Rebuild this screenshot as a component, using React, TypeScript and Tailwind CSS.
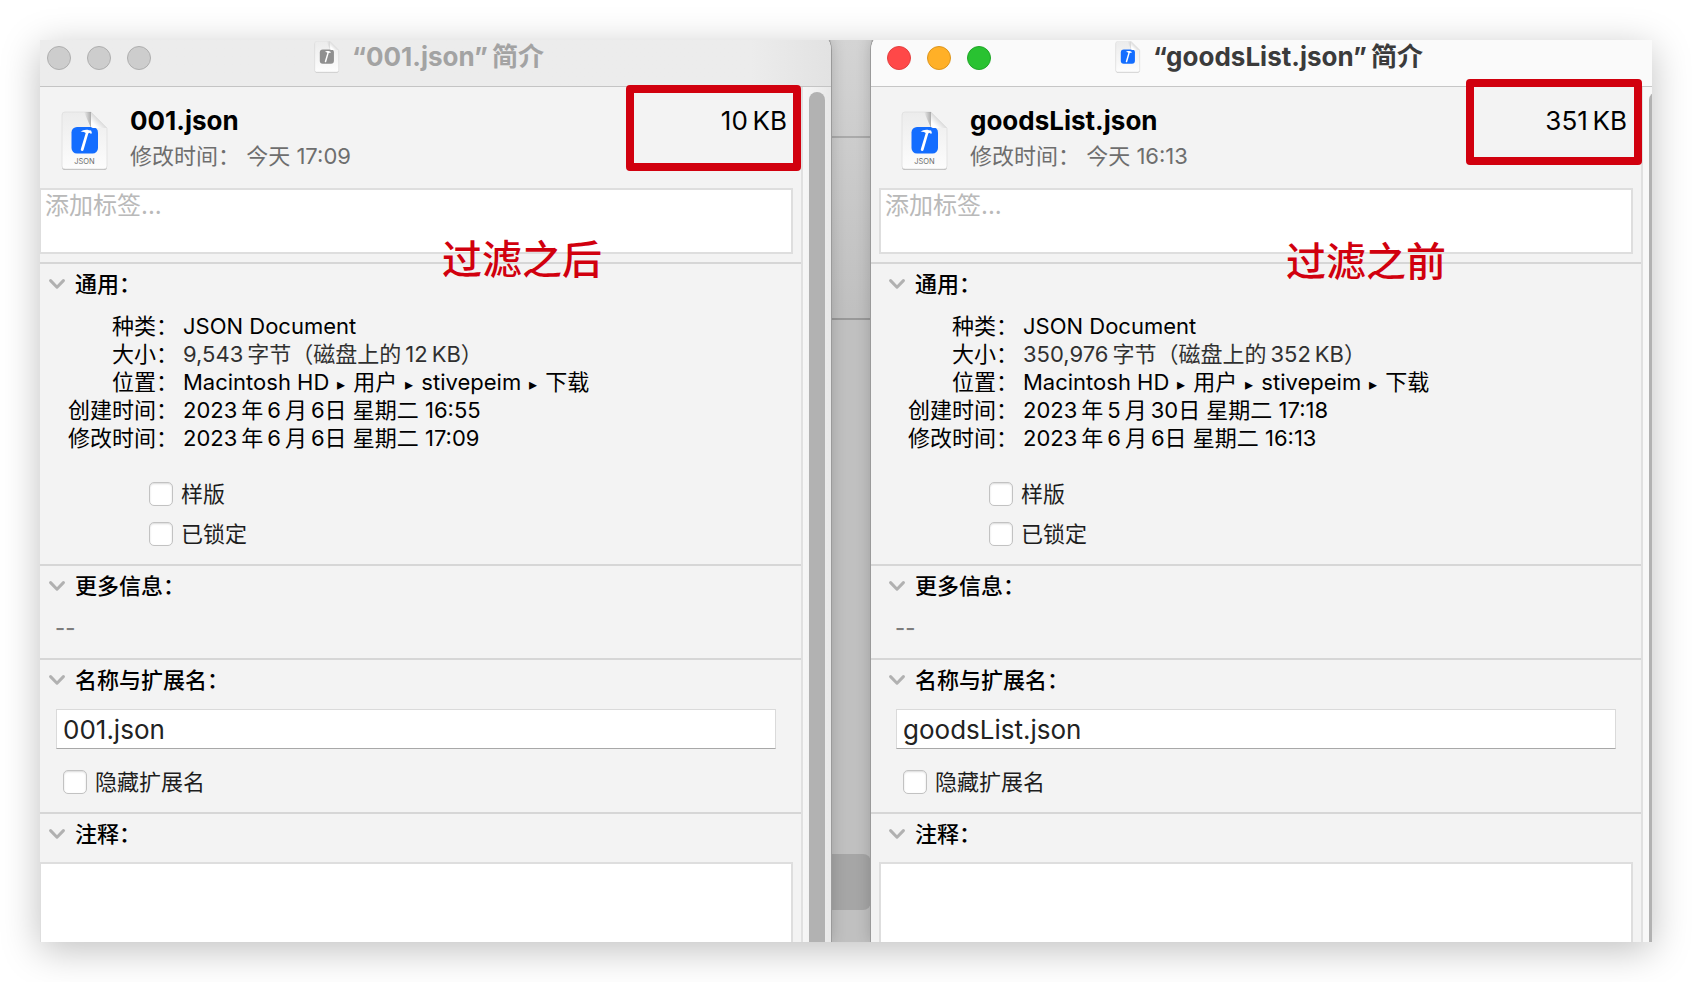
import React, { useId } from "react";

type FileInfo = {
  name: string;
  size: string;
  modifiedShort: string;
  sizeDetail: string;
  created: string;
  modified: string;
};

function FileIcon({ muted = false, label = false, className }: { muted?: boolean; label?: boolean; className: string }) {
  const id = useId();
  return (
    <svg viewBox="0 0 48 60" className={className} aria-hidden="true">
      <defs>
        <linearGradient id={id + "page"} x1="0" y1="0" x2="0" y2="1">
          <stop offset="0" stopColor="#ececec" />
          <stop offset="1" stopColor="#fdfdfd" />
        </linearGradient>
        <linearGradient id={id + "fold"} x1="0" y1="1" x2="1" y2="0">
          <stop offset="0.2" stopColor="#ffffff" />
          <stop offset="0.5" stopColor="#dcdcdc" />
        </linearGradient>
        <linearGradient id={id + "shade"} x1="0" y1="0" x2="1" y2="0">
          <stop offset="0" stopColor="#000" stopOpacity="0" />
          <stop offset="1" stopColor="#000" stopOpacity={label ? 0.28 : 0.1} />
        </linearGradient>
      </defs>
      <path d="M4 2h26l16 16v38a3 3 0 0 1-3 3H4a3 3 0 0 1-3-3V5a3 3 0 0 1 3-3z" fill="#b4b4b4" />
      <path d="M4 1h26l16 16v38a3 3 0 0 1-3 3H4a3 3 0 0 1-3-3V4a3 3 0 0 1 3-3z" fill={`url(#${id}page)`} stroke="#dedede" strokeWidth="0.8" />
      <path d="M23 1h7v16z" fill={`url(#${id}shade)`} />
      <rect x="10.5" y="16" width="26.500" height="26.500" rx="5.500" fill={muted ? "#8f8f8f" : "#136dff"} />
      <path d="M30 1l16 16H32a2 2 0 0 1-2-2z" fill={`url(#${id}fold)`} />
      <path
        d="M19.600 20.900c1.900-1.900 5.700-2.800 8.400-1.700l2.100.3.900 2.700-1.200.5-1.500-.9-1 .6-4.700 16.300c-.3 1-.9 1.400-1.800 1.200-.9-.3-1.200-1-.9-1.900l4.800-16.100c-1.500-1-3.200-1.300-5.100-1z"
        fill="#fff"
      />
      {label && (
        <text x="23.500" y="53" textAnchor="middle" fontSize="7.500" fontFamily="Inter, sans-serif" fill="#6a6a6a">
          JSON
        </text>
      )}
    </svg>
  );
}

function Section({ title, className = "", children }: { title: string; className?: string; children: React.ReactNode }) {
  return (
    <section className={`border-t-2 border-[#d6d6d6] ${className}`}>
      <h2>
        <button type="button" className="ml-[18px] flex h-10 items-center gap-[10px] font-medium text-black">
          <svg viewBox="0 0 16 10" className="h-[10px] w-4" fill="none" stroke="#b1b1b1" strokeWidth="3" strokeLinecap="round" strokeLinejoin="round" aria-hidden="true">
            <path d="M1.600 1.600L8 8.200l6.400-6.600" />
          </svg>
          {title}
        </button>
      </h2>
      {children}
    </section>
  );
}

function Check({ label, className }: { label: string; className: string }) {
  return (
    <label className={`flex h-6 items-center gap-2 text-[#1d1d1d] ${className}`}>
      <input
        type="checkbox"
        className="size-6 shrink-0 appearance-none rounded-[5px] border border-[#c2c2c2] bg-white shadow-[inset_0_1px_2px_rgba(0,0,0,0.15)]"
      />
      {label}
    </label>
  );
}

function Location({ path }: { path: string[] }) {
  return path.map((part, i) => (
    <React.Fragment key={part}>
      {i > 0 && <span className="mx-2 text-base">▸</span>}
      {part}
    </React.Fragment>
  ));
}

function InfoWindow({ file, active, className, children }: { file: FileInfo; active: boolean; className: string; children: React.ReactNode }) {
  const rows: [string, React.ReactNode, string][] = [
    ["种类：", "JSON Document", "text-black"],
    ["大小：", file.sizeDetail, "text-[#303030]"],
    ["位置：", <Location path={["Macintosh HD", "用户", "stivepeim", "下载"]} />, "text-black"],
    ["创建时间：", file.created, "text-black"],
    ["修改时间：", file.modified, "text-black"],
  ];
  const lights = active
    ? ["bg-[#ff4848] border-[#e33f3f]", "bg-[#ffb027] border-[#dd951c]", "bg-[#29c231] border-[#20a628]"]
    : ["bg-[#cdcdcd] border-[#aeaeae]", "bg-[#cdcdcd] border-[#aeaeae]", "bg-[#cdcdcd] border-[#aeaeae]"];
  return (
    <article
      className={`relative -mt-[10px] flex min-w-0 flex-1 flex-col rounded-t-[20px] bg-[#f3f3f3] shadow-[0_0_0_1px_#9a9a9a,0_0_16px_rgba(0,0,0,0.2)] ${className}`}
    >
      <header
        className={`relative flex h-[57px] items-center justify-center gap-3 rounded-t-[20px] border-b pr-1 pb-[3px] ${active ? "border-[#c6c6c6] bg-[#fafafa] text-[#3b3b3b]" : "border-[#c4c4c4] bg-linear-to-r from-[#ececec] from-90% to-[#e2e2e2] text-[#a3a3a3]"}`}
      >
        <div className="absolute top-4 left-4 flex gap-4">
          {lights.map((light, i) => (
            <button key={i} type="button" aria-label={["关闭", "最小化", "缩放"][i]} className={`size-6 rounded-full border ${light}`} />
          ))}
        </div>
        <FileIcon muted={!active} className="h-8 w-[26px]" />
        <h1 className="text-[26px] leading-8 font-bold whitespace-nowrap">“{file.name}”{"\u2009"}简介</h1>
      </header>

      <div className="flex flex-1">
        <div className="min-w-0 flex-1">
          <div className="flex pt-[18px] pr-[14px] pb-[17px] pl-[30px]">
            <FileIcon label className="mt-[6px] h-[60px] w-12" />
            <div className="ml-[21px] flex-1">
              <p className="text-[26px] leading-8 font-bold text-black">{file.name}</p>
              <p className="mt-[5px] leading-7 text-[#6e6e6e]">修改时间： {file.modifiedShort}</p>
            </div>
            <p className="text-[26px] leading-8 text-black">{file.size}</p>
          </div>

          <div className="px-2 pb-2">
            <textarea
              aria-label="标签"
              placeholder="添加标签..."
              className="block h-[66px] w-full resize-none overflow-hidden border-2 border-[#dedede] bg-white px-1 text-2xl leading-8 placeholder:text-[#b9b9b9]"
            />
          </div>

          <Section title="通用：" className="pb-[18px]">
            <dl className="mt-2 grid grid-cols-[147px_1fr] gap-x-[5px] leading-7">
              {rows.map(([term, value, color]) => (
                <React.Fragment key={term}>
                  <dt className="text-right text-black">{term}</dt>
                  <dd className={`h-7 whitespace-nowrap ${color}`}>{value}</dd>
                </React.Fragment>
              ))}
            </dl>
            <div className="mt-[30px] flex flex-col gap-4">
              <Check label="样版" className="ml-[118px]" />
              <Check label="已锁定" className="ml-[118px]" />
            </div>
          </Section>

          <Section title="更多信息：" className="pb-4">
            <p className="mt-2 ml-6 leading-7 font-medium text-[#7d7d7d]">--</p>
          </Section>

          <Section title="名称与扩展名：" className="pb-[18px]">
            <div className="mt-[9px] px-[25px]">
              <input
                aria-label="名称与扩展名"
                defaultValue={file.name}
                className="block h-10 w-full border border-[#dadada] border-b-[#a8a8a8] bg-white px-[6px] text-[26px] text-[#222222]"
              />
            </div>
            <Check label="隐藏扩展名" className="mt-[21px] ml-8" />
          </Section>

          <Section title="注释：">
            <div className="mt-2 px-2">
              <textarea aria-label="注释" className="block h-20 w-full resize-none border-2 border-b-0 border-[#dedede] bg-white" />
            </div>
          </Section>
        </div>
        <div
          className={`flex w-[30px] border-l-2 border-[#e0e0e0] px-[6px] pt-[5px] ${active ? "bg-[#f8f8f8]" : "bg-linear-to-r from-[#f6f6f6] to-[#e8e8e8]"}`}
        >
          <div className="flex-1 rounded-t-full bg-[#b2b2b2]" />
        </div>
      </div>
      {children}
    </article>
  );
}

const filtered: FileInfo = {
  name: "001.json",
  size: "10\u2009KB",
  modifiedShort: "今天 17:09",
  sizeDetail: "9,543\u2009字节（磁盘上的\u200912\u2009KB）",
  created: "2023\u2009年\u20096\u2009月\u20096日 星期二 16:55",
  modified: "2023\u2009年\u20096\u2009月\u20096日 星期二 17:09",
};

const original: FileInfo = {
  name: "goodsList.json",
  size: "351\u2009KB",
  modifiedShort: "今天 16:13",
  sizeDetail: "350,976\u2009字节（磁盘上的\u2009352\u2009KB）",
  created: "2023\u2009年\u20095\u2009月\u200930日 星期二 17:18",
  modified: "2023\u2009年\u20096\u2009月\u20096日 星期二 16:13",
};

export default function App() {
  return (
    <main className="bg-white p-10 font-['Inter','Noto_Sans_CJK_SC',sans-serif] text-[22px]">
      <div className="shadow-[0_8px_36px_rgba(0,0,0,0.25)]">
        <div className="flex overflow-hidden bg-[#c8c8c8]">
          <InfoWindow file={filtered} active={false} className="-ml-[9px]">
            <div className="absolute top-[55px] right-[30px] h-[86px] w-[175px] rounded-[4px] border-8 border-[#d1000e]" />
            <p className="absolute top-[206px] left-[411px] text-[40px] leading-[48px] font-medium text-[#d1000e]">过滤之后</p>
          </InfoWindow>
          <div className="flex w-10 flex-col bg-linear-to-b from-[#d4d4d4] to-[#c0c0c0] to-30%">
            <div className="h-[98px] border-b-2 border-[#aaaaaa]" />
            <div className="h-[182px] border-b-2 border-[#999999]" />
            <div className="mt-auto mb-8 h-14 rounded-r-lg bg-[#a6a6a6]" />
          </div>
          <InfoWindow file={original} active className="-mr-[19px]">
            <div className="absolute top-[49px] right-[29px] h-[86px] w-44 rounded-[4px] border-8 border-[#d1000e]" />
            <p className="absolute top-[208px] left-[415px] text-[40px] leading-[48px] font-medium text-[#d1000e]">过滤之前</p>
          </InfoWindow>
        </div>
      </div>
    </main>
  );
}
